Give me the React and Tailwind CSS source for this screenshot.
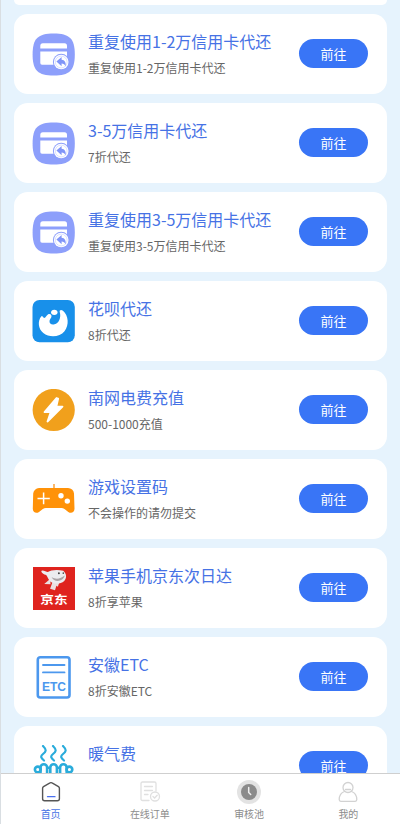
const CardIcon = () => (
  <svg viewBox="0 0 43 43" className="size-[43px]">
    <path d="M21.700.4C37.500.4 42.800 5.500 42.800 21.400S37.500 42.500 21.700 42.500.6 37.300.6 21.400 5.900.4 21.700.4Z" fill="#8d9ffb" />
    <path d="M8.300 15.500v-2.700a2.500 2.500 0 0 1 2.500-2.500h21.700a2.500 2.500 0 0 1 2.500 2.500v2.700Z" fill="#fff" />
    <path d="M8.300 18.500H35V30a1.700 1.700 0 0 1-1.700 1.700H10A1.700 1.700 0 0 1 8.300 30Z" fill="#fff" />
    <circle cx="29.200" cy="29" r="8.300" fill="#8d9ffb" />
    <circle cx="29.200" cy="29" r="7.300" fill="#fff" />
    <circle cx="29.200" cy="29" r="5.900" fill="none" stroke="#b9c4fc" strokeWidth=".5" />
    <path d="M24.400 28.500l5.200-4.400v2.700c3.200.3 4.600 2.700 4 6.600-.9-2-2.100-2.800-4-2.800v2.600Z" fill="#8095f8" />
  </svg>
);

const HuabeiIcon = () => (
  <svg viewBox="0 0 43 43" className="size-[43px]">
    <rect x=".5" width="42.300" height="42.300" rx="7" fill="#1890ea" />
    <path
      d="M9.300 16.300C5.300 21.500 6.300 29 11.300 33c6.200 5 16.500 4.200 21.200-1.800 4.900-6.300 4-15.700-1.500-20.500-1.800-1.500-3.700-.8-3.300 1 1.700 5.800-.7 11.600-5.200 12.600-3.200.7-5.200-.7-5-3.200.2-2.200 2-3 2-4.900 0-1.900-2-2.700-3.600-1.600-1.700 1.200-2 3.200-3.700 3.500-.9-.1-.8-2.400-2.900-1.800Z"
      fill="#fff"
    />
    <ellipse cx="22.300" cy="12.300" rx="3.200" ry="2.600" fill="#fff" />
  </svg>
);

const PowerIcon = () => (
  <svg viewBox="0 0 43 43" className="size-[43px]">
    <circle cx="21.700" cy="21" r="21.100" fill="#f1a01c" />
    <path
      d="M24.500 9L12.500 23h6.200l-3.200 9.500L30.500 17.700h-6.200l1.900-8.200Z"
      fill="#fff"
      stroke="#fff"
      strokeWidth="1.800"
      strokeLinejoin="round"
    />
  </svg>
);

const GameIcon = () => (
  <svg viewBox="0 0 43 43" className="size-[43px]">
    <path d="M22 6v6" stroke="#f99a2c" strokeWidth="1.400" />
    <path
      d="M7 10h29a6 6 0 0 1 6 5.500l.5 15.200c.1 3.800-3.600 5.300-6.200 3.200L32.500 31a5 5 0 0 0-3.200-1.100H14a5 5 0 0 0-3.200 1.100L7 33.900c-2.600 2.100-6.300.6-6.200-3.200L1.200 15.500A6 6 0 0 1 7 10Z"
      fill="#ff9208"
    />
    <path d="M11.600 14.500v11.800M5.500 20.400h12.300" stroke="#fff" strokeWidth="1.500" />
    <circle cx="29" cy="17.700" r="2.700" fill="#fff" />
    <circle cx="35.300" cy="23.100" r="2.700" fill="#fff" />
  </svg>
);

const JdIcon = () => (
  <div className="ml-px flex h-[43px] w-[42px] flex-col items-center overflow-hidden bg-[#df231e]">
    <svg viewBox="0 0 43 25" className="h-[25px] w-[42px] shrink-0">
      <path d="M17.500 12l-6 5 6.500.3ZM20 15l-2.500 7 5 1.500 1.500-4.500 1.500 1 1.500-5Z" fill="#eadfe0" />
      <path d="M13.500 8C8.500 6.500 7.300 3 9.800 3.200c1.700.2 4 1.300 5.400 1.500C18 2.700 25 2 31 3.500c3.500 3 3.800 7.500 1 10.500-4 3.500-11 3.500-14.700.3-1.500-1.400-2.300-4.500-3.800-6.300Z" fill="#ececef" />
      <path d="M19 10c4 2.600 9 2.200 13.500-1.500-1.500 6.500-11 7.500-13.500 1.500Z" fill="#aaa4a7" />
      <circle cx="26.500" cy="6" r="1" fill="#444" />
      <circle cx="31" cy="6" r=".8" fill="#444" />
    </svg>
    <span className="scale-x-105 scale-y-90 text-[13px] leading-[15px] font-bold text-white">京东</span>
  </div>
);

const EtcIcon = () => (
  <svg viewBox="0 0 43 43" className="size-[43px]">
    <rect x="5.800" y="1.300" width="31.700" height="40.200" rx="2.500" fill="none" stroke="#4c98ee" strokeWidth="2.600" />
    <path d="M11 9h21.500M11 16.400h21.500" stroke="#4c98ee" strokeWidth="1.900" strokeLinecap="round" />
    <text
      x="21.900"
      y="35"
      textAnchor="middle"
      fontFamily="Liberation Sans, sans-serif"
      fontWeight="bold"
      fontSize="12"
      fill="#4c98ee"
    >
      ETC
    </text>
  </svg>
);

const HeatIcon = () => (
  <svg viewBox="0 0 43 43" className="size-[43px]" fill="none" stroke="#2aacdb" strokeLinecap="round">
    <path
      d="M11 1c4 4 3 5.500 0 8s-2 4 1 6.500M21 1c4 4 3 5.500 0 8s-2 4 1 6.500M31 1c4 4 3 5.500 0 8s-2 4 1 6.500"
      strokeWidth="2.200"
    />
    <path
      d="M8.500 27v-4.500a3.300 3.300 0 0 1 6.600 0V40M18.300 40V22.500a3.300 3.300 0 0 1 6.600 0V40M28.100 40V22.500a3.300 3.300 0 0 1 6.600 0V27M8.500 27v13M34.700 27v13M15.100 22.800h3.200M24.900 22.800h3.200"
      strokeWidth="2.600"
    />
    <circle cx="5.800" cy="24.500" r="2.900" strokeWidth="2.600" />
    <circle cx="37.400" cy="24.500" r="2.900" strokeWidth="2.600" />
  </svg>
);

const services = [
  { title: '重复使用1-2万信用卡代还', desc: '重复使用1-2万信用卡代还', icon: CardIcon },
  { title: '3-5万信用卡代还', desc: '7折代还', icon: CardIcon },
  { title: '重复使用3-5万信用卡代还', desc: '重复使用3-5万信用卡代还', icon: CardIcon },
  { title: '花呗代还', desc: '8折代还', icon: HuabeiIcon },
  { title: '南网电费充值', desc: '500-1000充值', icon: PowerIcon },
  { title: '游戏设置码', desc: '不会操作的请勿提交', icon: GameIcon },
  { title: '苹果手机京东次日达', desc: '8折享苹果', icon: JdIcon },
  { title: '安徽ETC', desc: '8折安徽ETC', icon: EtcIcon },
  { title: '暖气费', desc: '', icon: HeatIcon },
];

const HomeIcon = () => (
  <svg viewBox="0 0 24 24" className="size-6" fill="none" strokeLinejoin="round" strokeLinecap="round">
    <path
      d="M3.600 8.300Q3.600 7.200 4.500 6.600L11 2.900Q12 2.300 13 2.900l6.500 3.700q.9.600.9 1.700V18.700q0 2-2 2H5.600q-2 0-2-2Z"
      stroke="#555"
      strokeWidth="1.400"
    />
    <path d="M8.500 16.700h7.500" stroke="#4a70f0" strokeWidth="1.300" />
  </svg>
);

const OrderIcon = () => (
  <svg viewBox="0 0 24 24" className="size-6" fill="none" stroke="#e0e0e0" strokeWidth="1.300" strokeLinecap="round">
    <path d="M11 20.500H4.500q-1.500 0-1.500-1.500V3.500Q3 2 4.500 2h12Q18 2 18 3.500V11M6.500 6.500h8M6.500 10.500h8M6.500 14.500h3.500" />
    <circle cx="17" cy="16.500" r="4.500" />
    <path d="M15 16.500l1.600 1.500 2.600-2.800" />
  </svg>
);

const ClockIcon = () => (
  <svg viewBox="0 0 24 24" className="size-6">
    <circle cx="12" cy="12" r="12" fill="#e3e3e3" />
    <circle cx="12" cy="12" r="8" fill="#8b8b8b" />
    <path d="M11.700 7.500v5l2 2" fill="none" stroke="#eee" strokeWidth="1.500" strokeLinecap="round" />
  </svg>
);

const UserIcon = () => (
  <svg viewBox="0 0 24 24" className="size-6" fill="none" stroke="#d2d2d2" strokeWidth="1.300" strokeLinecap="round">
    <circle cx="12" cy="7.500" r="5" />
    <path d="M8.500 11.500C5.500 12.500 3.300 15.500 3.200 19.500q0 1.800 1.600 1.800h14.400q1.600 0 1.600-1.800C20.700 15.500 18.500 12.500 15.500 11.500M9.500 9.500h5" />
  </svg>
);

const tabs = [
  { label: '首页', icon: HomeIcon, active: true },
  { label: '在线订单', icon: OrderIcon },
  { label: '审核池', icon: ClockIcon },
  { label: '我的', icon: UserIcon },
];

const ServiceCard = ({ title, desc, icon: Icon }) => (
  <div className="flex h-20 shrink-0 items-center rounded-[14px] bg-white pr-[19px] pl-[18px]">
    <div className="w-[43px] shrink-0">
      <Icon />
    </div>
    <div className="ml-[13px] flex h-full flex-1 flex-col pt-[15px] whitespace-nowrap">
      <div className="text-base leading-6 text-[#4672e5]">{title}</div>
      <div className="mt-1.5 text-xs leading-[18px] text-[#666]">{desc}</div>
    </div>
    <button className="mb-px h-[29px] w-[69px] shrink-0 rounded-full bg-[#3975f6] text-[13px] text-white">前往</button>
  </div>
);

const App = () => {
  return (
    <div className="flex h-[824px] w-[400px] flex-col overflow-hidden border-l border-[#d9dee2] bg-[#e6f3fd] font-['Noto_Sans_CJK_SC',sans-serif]">
      <div className="flex min-h-0 flex-1 flex-col gap-[9px] overflow-hidden px-[13px]">
        <div className="h-[5px] shrink-0 rounded-b-[14px] bg-white" />
        {services.map((item) => (
          <ServiceCard key={item.title} {...item} />
        ))}
      </div>
      <nav className="grid h-[51px] shrink-0 grid-cols-4 border-t border-[#cfcfcf] bg-white pr-0.5">
        {tabs.map(({ label, icon: Icon, active }) => (
          <div key={label} className="flex flex-col items-center pt-1.5">
            <Icon />
            <span className={active ? 'mt-0.5 text-[10px] leading-[15px] text-[#4672e5]' : 'mt-0.5 text-[10px] leading-[15px] text-[#8c8c8c]'}>
              {label}
            </span>
          </div>
        ))}
      </nav>
    </div>
  );
};

export default App;
